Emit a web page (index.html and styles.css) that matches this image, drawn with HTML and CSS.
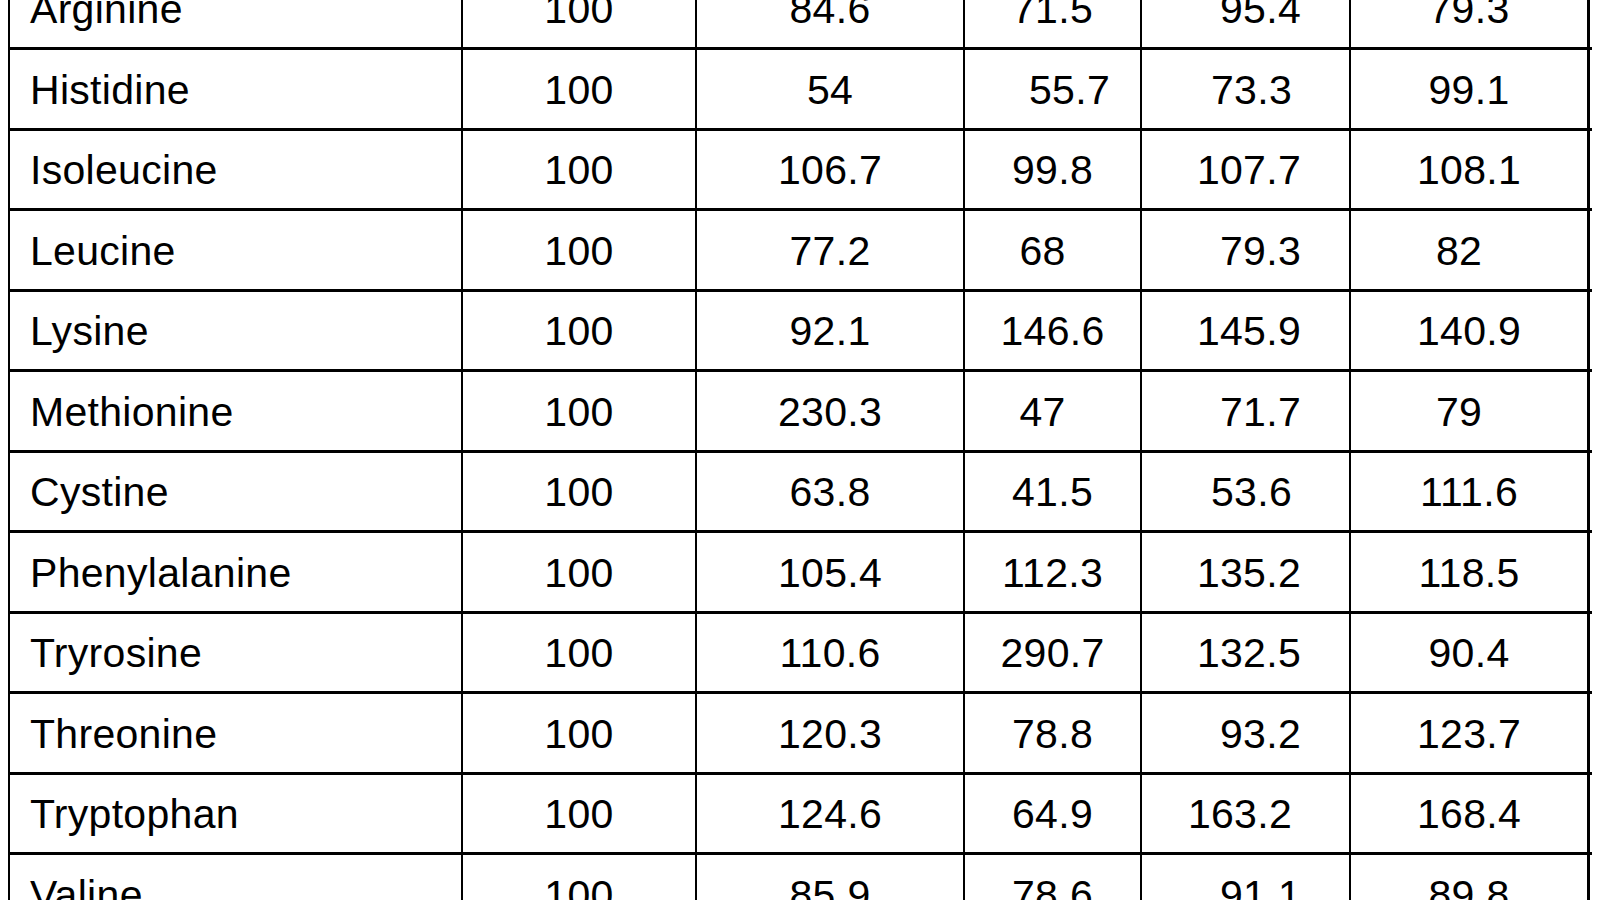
FILE: index.html
```html
<!DOCTYPE html>
<html lang="en">
<head>
<meta charset="utf-8">
<title>Amino acid table</title>
<link rel="stylesheet" href="styles.css">
</head>
<body>
<div class="table">
  <div class="row"><div class="cell name">Arginine</div><div class="cell">100</div><div class="cell">84.6</div><div class="cell">71.5</div><div class="cell c5">95.4</div><div class="cell">79.3</div></div>
  <div class="row"><div class="cell name">Histidine</div><div class="cell">100</div><div class="cell">54</div><div class="cell sr">55.7</div><div class="cell c5 in">73.3</div><div class="cell">99.1</div></div>
  <div class="row"><div class="cell name">Isoleucine</div><div class="cell">100</div><div class="cell">106.7</div><div class="cell">99.8</div><div class="cell c5">107.7</div><div class="cell">108.1</div></div>
  <div class="row"><div class="cell name">Leucine</div><div class="cell">100</div><div class="cell">77.2</div><div class="cell sl">68</div><div class="cell c5">79.3</div><div class="cell sl">82</div></div>
  <div class="row"><div class="cell name">Lysine</div><div class="cell">100</div><div class="cell">92.1</div><div class="cell">146.6</div><div class="cell c5">145.9</div><div class="cell">140.9</div></div>
  <div class="row"><div class="cell name">Methionine</div><div class="cell">100</div><div class="cell">230.3</div><div class="cell sl">47</div><div class="cell c5">71.7</div><div class="cell sl">79</div></div>
  <div class="row"><div class="cell name">Cystine</div><div class="cell">100</div><div class="cell">63.8</div><div class="cell">41.5</div><div class="cell c5 in">53.6</div><div class="cell">111.6</div></div>
  <div class="row"><div class="cell name">Phenylalanine</div><div class="cell">100</div><div class="cell">105.4</div><div class="cell">112.3</div><div class="cell c5">135.2</div><div class="cell">118.5</div></div>
  <div class="row"><div class="cell name">Tryrosine</div><div class="cell">100</div><div class="cell">110.6</div><div class="cell">290.7</div><div class="cell c5">132.5</div><div class="cell">90.4</div></div>
  <div class="row"><div class="cell name">Threonine</div><div class="cell">100</div><div class="cell">120.3</div><div class="cell">78.8</div><div class="cell c5">93.2</div><div class="cell">123.7</div></div>
  <div class="row"><div class="cell name">Tryptophan</div><div class="cell">100</div><div class="cell">124.6</div><div class="cell">64.9</div><div class="cell c5 in">163.2</div><div class="cell">168.4</div></div>
  <div class="row"><div class="cell name">Valine</div><div class="cell">100</div><div class="cell">85.9</div><div class="cell">78.6</div><div class="cell c5">91.1</div><div class="cell">89.8</div></div>
</div>
</body>
</html>
```
FILE: styles.css
```css
html, body {
  margin: 0;
  padding: 0;
  background: #ffffff;
  overflow: hidden;
  height: 100%;
}

body {
  font-family: "Liberation Sans", Arial, sans-serif;
  color: #000000;
}

.table {
  margin-top: -30.5px;
  margin-left: 8px;
  width: 1582px;
  border-left: 2px solid #000;
}

.row {
  display: grid;
  grid-template-columns: 453px 234px 268px 177px 209px 239px;
  height: 80.5px;
  box-sizing: border-box;
  border-bottom: 3px solid #000;
}

.cell {
  display: flex;
  align-items: center;
  justify-content: center;
  font-size: 41px;
  letter-spacing: 0.3px;
  padding-top: 3px;
  border-right: 2px solid #000;
  box-sizing: border-box;
  white-space: nowrap;
}

.cell:last-child {
  border-right-width: 3px;
}

.name {
  justify-content: flex-start;
  padding-left: 20px;
}

.c5 {
  justify-content: flex-end;
  padding-right: 48px;
}

.c5.in {
  padding-right: 57px;
}

.sl {
  padding-right: 20px;
}

.sr {
  padding-left: 34px;
}
```
